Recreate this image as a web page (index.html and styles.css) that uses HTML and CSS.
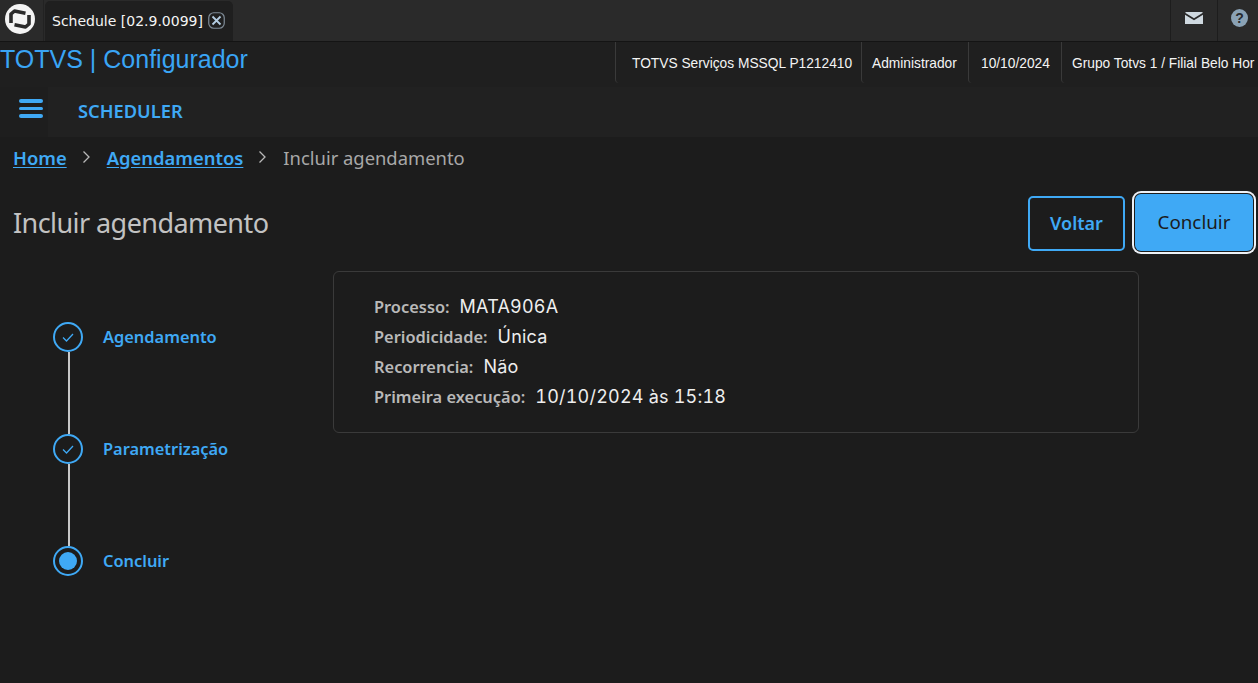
FILE: index.html
```html
<!DOCTYPE html>
<html lang="pt">
<head>
<meta charset="utf-8">
<title>Schedule</title>
<link rel="stylesheet" href="styles.css">
</head>
<body>
<div class="tabbar">
  <div class="logo-cell">
    <svg class="logo" width="32" height="32" viewBox="0 0 32 32"><circle cx="16" cy="16" r="15" fill="#f4f4f4"/><path d="M7 20 V11 L10.5 8 L21.5 10.2" fill="none" stroke="#2a2a2a" stroke-width="3.6" stroke-linejoin="round"/><path d="M25 12 V21 L21.5 24 L10.5 21.8" fill="none" stroke="#2a2a2a" stroke-width="3.6" stroke-linejoin="round"/></svg>
  </div>
  <div class="tab">
    <span class="tab-label">Schedule [02.9.0099]</span>
    <svg class="tab-close" width="17" height="17" viewBox="0 0 17 17"><rect x="0.75" y="0.75" width="15.5" height="15.5" rx="5" fill="none" stroke="#7f8c98" stroke-width="1.2"/><path d="M4.5 4.5 L12.5 12.5 M12.5 4.5 L4.5 12.5" stroke="#b4cde2" stroke-width="1.8"/></svg>
  </div>
  <div class="tab-spacer"></div>
  <div class="tool">
    <svg width="18" height="12" viewBox="0 0 18 12"><path d="M0.5 0 H17.5 V1 L9 6.2 L0.5 1 Z" fill="#cfd9e0"/><path d="M0 2.8 L9 8.2 L18 2.8 V12 H0 Z" fill="#cfd9e0"/></svg>
  </div>
  <div class="tool tool-help">
    <svg width="17" height="18" viewBox="0 0 17 18"><ellipse cx="8.5" cy="9" rx="8.5" ry="9" fill="#8aa2b5"/><text x="8.5" y="14" text-anchor="middle" class="help-mark">?</text></svg>
  </div>
</div>
<header class="apphead">
  <div class="apptitle">TOTVS | Configurador</div>
  <div class="infos">
    <div class="info info-a">TOTVS Serviços MSSQL P1212410</div>
    <div class="info info-b">Administrador</div>
    <div class="info info-c">10/10/2024</div>
    <div class="info info-d">Grupo Totvs 1 / Filial Belo Hor</div>
  </div>
</header>
<nav class="menubar">
  <div class="burger"><span></span><span></span><span></span></div>
  <div class="menutitle">SCHEDULER</div>
</nav>
<main class="page">
  <div class="crumbs">
    <a class="crumb-link" href="#">Home</a>
    <svg class="chev" width="9" height="14" viewBox="0 0 9 14"><path d="M1.5 1.5 L7 7 L1.5 12.5" fill="none" stroke="#b8b8b8" stroke-width="1.3"/></svg>
    <a class="crumb-link" href="#">Agendamentos</a>
    <svg class="chev" width="9" height="14" viewBox="0 0 9 14"><path d="M1.5 1.5 L7 7 L1.5 12.5" fill="none" stroke="#b8b8b8" stroke-width="1.3"/></svg>
    <span class="crumb-current">Incluir agendamento</span>
  </div>
  <div class="headrow">
    <h1 class="pagetitle">Incluir agendamento</h1>
    <div class="actions">
      <button class="btn btn-ghost">Voltar</button>
      <button class="btn btn-primary">Concluir</button>
    </div>
  </div>
  <div class="body">
    <ol class="steps">
      <li class="step">
        <span class="dot"><svg width="12" height="9" viewBox="0 0 12 9"><path d="M1 4.5 L4.5 8 L11 1" fill="none" stroke="#3fa9f5" stroke-width="1.3"/></svg></span>
        <span class="step-label">Agendamento</span>
      </li>
      <li class="step">
        <span class="dot"><svg width="12" height="9" viewBox="0 0 12 9"><path d="M1 4.5 L4.5 8 L11 1" fill="none" stroke="#3fa9f5" stroke-width="1.3"/></svg></span>
        <span class="step-label">Parametrização</span>
      </li>
      <li class="step">
        <span class="dot"><span class="dot-fill"></span></span>
        <span class="step-label">Concluir</span>
      </li>
    </ol>
    <section class="card">
      <p class="row"><span class="key">Processo:</span><span class="val">MATA906A</span></p>
      <p class="row"><span class="key">Periodicidade:</span><span class="val">Única</span></p>
      <p class="row"><span class="key">Recorrencia:</span><span class="val">Não</span></p>
      <p class="row"><span class="key">Primeira execução:</span><span class="val">10/10/2024 às 15:18</span></p>
    </section>
  </div>
</main>
</body>
</html>
```
FILE: styles.css
```css
* { box-sizing: border-box; }
html, body { margin: 0; height: 100%; overflow: hidden; }
body {
  width: 1258px;
  height: 683px;
  background: #1c1c1c;
  font-family: "Noto Sans", sans-serif;
  display: flex;
  flex-direction: column;
}

.tabbar {
  height: 42px;
  display: flex;
  flex: none;
  background: #2a2a2a;
  border-bottom: 1px solid #141414;
}
.logo-cell {
  width: 44px;
  display: flex;
  align-items: flex-start;
  padding: 3px 0 0 4px;
  border-right: 1px solid #222;
}
.logo { display: block; }
.tab {
  width: 188px;
  margin-left: 1px;
  margin-top: 1px;
  background: #1f1f1f;
  border-radius: 5px 5px 0 0;
  display: flex;
  align-items: center;
  padding: 0 0 1px 7px;
  gap: 5px;
}
.tab-label {
  font-family: "DejaVu Sans", sans-serif;
  font-size: 14px;
  color: #f4f4f4;
  white-space: nowrap;
}
.tab-spacer { flex: 1; }
.tool {
  width: 47px;
  display: flex;
  align-items: center;
  justify-content: center;
  border-left: 1px solid #1d1d1d;
  padding-bottom: 5px;
}
.tool-help { width: 41px; padding-left: 3px; }
.help-mark { font-family: "Liberation Sans", sans-serif; font-size: 14px; font-weight: 700; fill: #262a2e; }

.apphead {
  height: 45px;
  flex: none;
  display: flex;
  justify-content: space-between;
  background: #1f1f1f;
}
.apptitle {
  font-family: "Liberation Sans", sans-serif;
  font-size: 25px;
  line-height: 35px;
  color: #3aa5f5;
  white-space: nowrap;
}
.infos { display: flex; height: 41px; }
.info {
  font-family: "Liberation Sans", sans-serif;
  font-size: 13.75px;
  color: #f4f4f4;
  line-height: 43px;
  white-space: nowrap;
  overflow: hidden;
  border-left: 1px solid #3a3a3a;
  border-bottom-left-radius: 4px;
  padding-left: 16px;
}
.info-a { width: 246px; }
.info-b { width: 107px; padding-left: 10px; }
.info-c { width: 93px; padding-left: 12px; }
.info-d { width: 197px; padding-left: 10px; }

.menubar {
  height: 50px;
  flex: none;
  display: flex;
  align-items: center;
  background: #212121;
}
.burger {
  width: 48px;
  height: 100%;
  background: #1e1e1e;
  display: flex;
  flex-direction: column;
  align-items: center;
  padding: 12px 0 0 13px;
  gap: 4px;
}
.burger span {
  width: 24px;
  height: 3.5px;
  border-radius: 2px;
  background: #3fa9f5;
}
.menutitle {
  margin-left: 30px;
  padding-bottom: 3px;
  font-size: 18.3px;
  font-weight: 600;
  color: #3fa9f5;
}

.page {
  flex: 1;
  padding: 7px 5px 0 13px;
  display: flex;
  flex-direction: column;
}
.crumbs {
  display: flex;
  align-items: center;
  height: 26px;
  font-size: 18.4px;
}
.crumb-link {
  color: #3fa9f5;
  font-weight: 600;
  text-decoration: underline;
  text-underline-offset: 2px;
}
.chev { margin: 0 16px 1px 15px; }
.crumb-current { color: #a8a8a8; }

.headrow {
  display: flex;
  justify-content: space-between;
  align-items: center;
  margin-top: 22px;
  height: 60px;
}
.pagetitle {
  margin: 0;
  font-size: 27px;
  font-weight: 400;
  letter-spacing: -0.57px;
  color: #c2c2c2;
}
.actions { display: flex; align-items: center; gap: 10px; }
.btn {
  font-family: "Noto Sans", sans-serif;
  font-size: 18px;
  height: 55px;
  border-radius: 5px;
  cursor: pointer;
}
.btn-ghost {
  width: 97px;
  margin-top: 2px;
  background: transparent;
  border: 2px solid #3fa9f5;
  color: #3fa9f5;
  font-weight: 600;
}
.btn-primary {
  width: 118px;
  height: 57px;
  font-size: 18.8px;
  background: #3fa9f5;
  border: 0;
  border-radius: 6px;
  box-shadow: 0 0 0 1px #1c1c1c, 0 0 0 3px #eef2f7;
  color: #1c1c1c;
}

.body {
  display: flex;
  align-items: flex-start;
  margin-top: 19px;
}
.steps {
  list-style: none;
  margin: 0;
  padding: 0 0 0 40px;
  width: 320px;
  flex: none;
}
.step {
  display: flex;
  align-items: center;
  height: 30px;
  margin-top: 51px;
  margin-bottom: 82px;
  gap: 20px;
  position: relative;
}
.step + .step { margin-top: 0; }
.step:not(:last-child)::after {
  content: "";
  position: absolute;
  left: 15px;
  top: 30px;
  width: 2px;
  height: 82px;
  background: #c8c8c8;
}
.dot {
  width: 30px;
  height: 30px;
  border: 2px solid #3fa9f5;
  border-radius: 50%;
  display: flex;
  align-items: center;
  justify-content: center;
  flex: none;
}
.dot-fill {
  width: 18px;
  height: 18px;
  border-radius: 50%;
  background: #3fa9f5;
}
.step-label {
  padding-bottom: 2px;
  font-size: 16.4px;
  font-weight: 600;
  color: #3fa9f5;
}

.card {
  width: 806px;
  height: 162px;
  border: 1px solid #3a3a3a;
  border-radius: 6px;
  padding: 19px 40px;
}
.row {
  margin: 0;
  height: 30px;
  display: flex;
  align-items: center;
  gap: 10px;
}
.key {
  font-size: 16.4px;
  font-weight: 600;
  color: #b9b9b9;
}
.val {
  font-family: "Inter", sans-serif;
  font-size: 18px;
  font-variant-numeric: tabular-nums;
  letter-spacing: 0.2px;
  color: #eeeeee;
}
```
